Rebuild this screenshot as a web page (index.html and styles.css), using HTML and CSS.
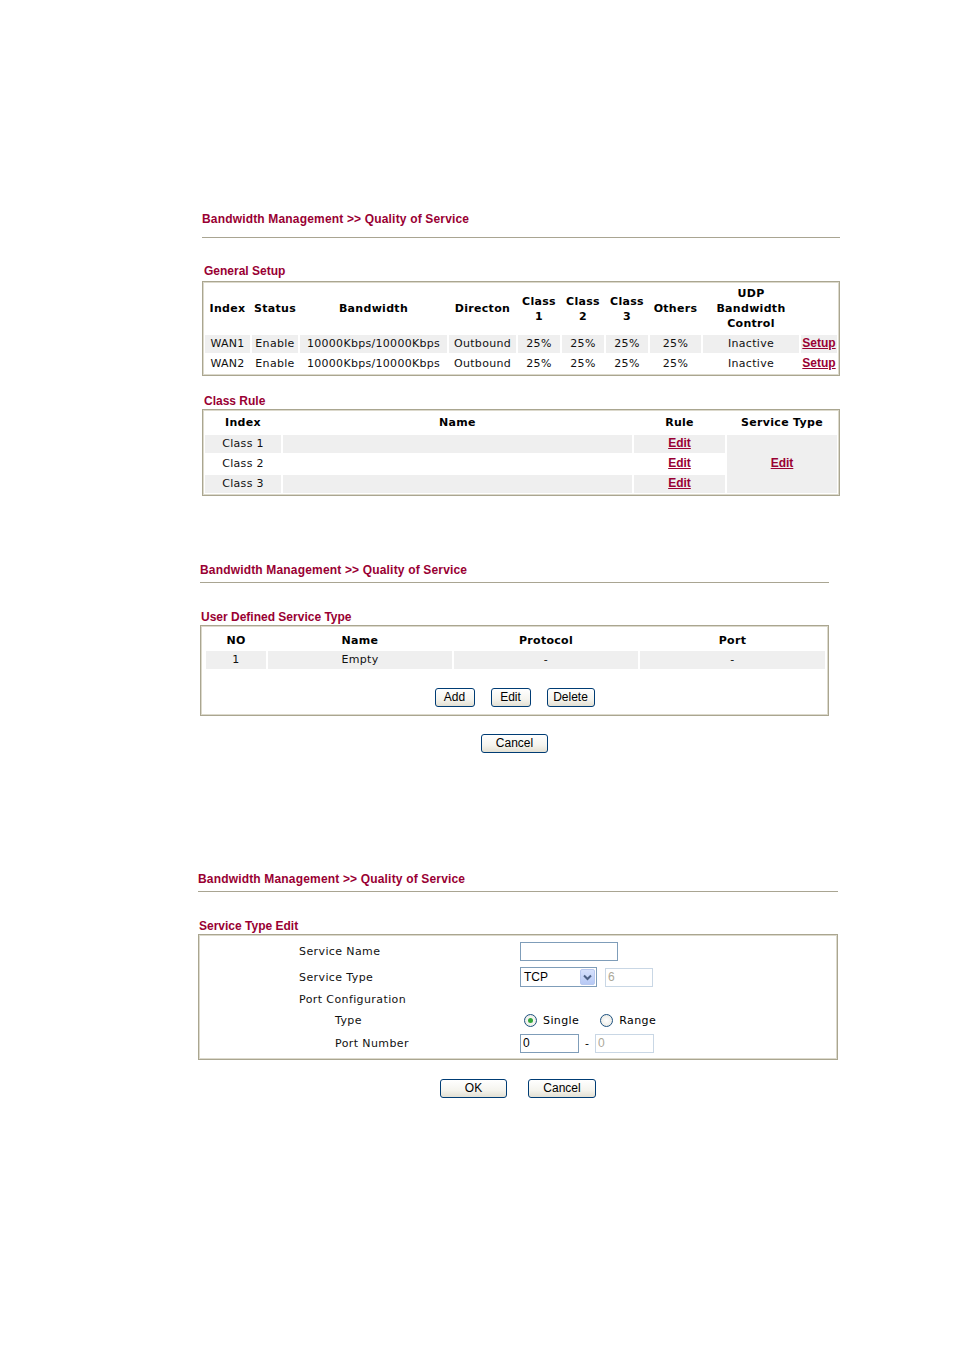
FILE: index.html
```html
<!DOCTYPE html>
<html>
<head>
<meta charset="utf-8">
<link rel="stylesheet" href="styles.css">
</head>
<body>
<main class="page">

<section class="panel p1">
  <h1 class="crumb">Bandwidth Management &gt;&gt; Quality of Service</h1>
  <div class="rule"></div>
  <h2 class="sec">General Setup</h2>
  <div class="box">
    <table class="grid gs">
      <colgroup>
        <col style="width:45px"><col style="width:46px"><col style="width:147px"><col style="width:67px">
        <col style="width:42px"><col style="width:42px"><col style="width:42px"><col style="width:51px">
        <col style="width:96px"><col style="width:36px">
      </colgroup>
      <tr class="head tall">
        <th>Index</th><th>Status</th><th>Bandwidth</th><th>Directon</th>
        <th>Class<br>1</th><th>Class<br>2</th><th>Class<br>3</th><th>Others</th>
        <th>UDP<br>Bandwidth<br>Control</th><th></th>
      </tr>
      <tr class="shade">
        <td>WAN1</td><td>Enable</td><td>10000Kbps/10000Kbps</td><td>Outbound</td>
        <td>25%</td><td>25%</td><td>25%</td><td>25%</td><td>Inactive</td><td><a class="lnk" href="#">Setup</a></td>
      </tr>
      <tr>
        <td>WAN2</td><td>Enable</td><td>10000Kbps/10000Kbps</td><td>Outbound</td>
        <td>25%</td><td>25%</td><td>25%</td><td>25%</td><td>Inactive</td><td><a class="lnk" href="#">Setup</a></td>
      </tr>
    </table>
  </div>

  <h2 class="sec sec-cr">Class Rule</h2>
  <div class="box box-cr">
    <table class="grid cr">
      <colgroup>
        <col style="width:76px"><col style="width:349px"><col style="width:91px"><col style="width:110px">
      </colgroup>
      <tr class="head">
        <th>Index</th><th>Name</th><th>Rule</th><th>Service Type</th>
      </tr>
      <tr class="shade">
        <td>Class 1</td><td></td><td><a class="lnk" href="#">Edit</a></td>
        <td rowspan="3" class="st"><a class="lnk" href="#">Edit</a></td>
      </tr>
      <tr>
        <td>Class 2</td><td></td><td><a class="lnk" href="#">Edit</a></td>
      </tr>
      <tr class="shade">
        <td>Class 3</td><td></td><td><a class="lnk" href="#">Edit</a></td>
      </tr>
    </table>
  </div>
</section>

<section class="panel p2">
  <h1 class="crumb">Bandwidth Management &gt;&gt; Quality of Service</h1>
  <div class="rule"></div>
  <h2 class="sec">User Defined Service Type</h2>
  <div class="box box-ud">
    <table class="grid ud">
      <colgroup>
        <col style="width:60px"><col style="width:184px"><col style="width:184px"><col style="width:185px">
      </colgroup>
      <tr class="head">
        <th>NO</th><th>Name</th><th>Protocol</th><th>Port</th>
      </tr>
      <tr class="shade">
        <td>1</td><td>Empty</td><td>-</td><td>-</td>
      </tr>
    </table>
    <div class="btnrow inbox">
      <button class="btn w40">Add</button>
      <button class="btn w40">Edit</button>
      <button class="btn w48">Delete</button>
    </div>
  </div>
  <div class="btnrow under">
    <button class="btn w67">Cancel</button>
  </div>
</section>

<section class="panel p3">
  <h1 class="crumb">Bandwidth Management &gt;&gt; Quality of Service</h1>
  <div class="rule"></div>
  <h2 class="sec">Service Type Edit</h2>
  <div class="box box-se">
    <div class="form">
      <div class="lbl">Service Name</div>
      <div class="fld"><input class="inp w98" type="text"></div>

      <div class="lbl">Service Type</div>
      <div class="fld">
        <span class="sel"><span class="selv">TCP</span><span class="arr"><svg width="9" height="7" viewBox="0 0 9 7"><path d="M1 1.5 L4.5 5 L8 1.5" fill="none" stroke="#4d6185" stroke-width="2"/></svg></span></span>
        <input class="inp w48 dis" type="text" value="6" disabled>
      </div>

      <div class="lbl">Port Configuration</div>
      <div class="fld"></div>

      <div class="lbl ind">Type</div>
      <div class="fld">
        <span class="radio on"></span><span class="rtxt">Single</span>
        <span class="radio"></span><span class="rtxt">Range</span>
      </div>

      <div class="lbl ind">Port Number</div>
      <div class="fld">
        <input class="inp w59" type="text" value="0">
        <span class="dash">-</span>
        <input class="inp w59 dis" type="text" value="0" disabled>
      </div>
    </div>
  </div>
  <div class="btnrow under3">
    <button class="btn w67">OK</button>
    <button class="btn w68">Cancel</button>
  </div>
</section>

</main>
</body>
</html>
```

FILE: styles.css
```css
* { box-sizing: border-box; }
html, body { margin: 0; padding: 0; background: #fff; }
body { font-family: "DejaVu Sans", Verdana, sans-serif; font-size: 11px; color: #000; }

.page { display: flex; flex-direction: column; padding-top: 212px; }

.panel { display: flex; flex-direction: column; }
.p1 { margin-left: 202px; width: 638px; }
.p2 { margin-left: 200px; width: 629px; margin-top: 67px; }
.p3 { margin-left: 198px; width: 640px; margin-top: 119px; }

.crumb {
  margin: 0; font-family: "Liberation Sans", Arial, sans-serif; font-weight: bold;
  font-size: 12px; line-height: 14px; height: 14px; color: #990033; white-space: nowrap;
  letter-spacing: 0.17px;
}
.rule { height: 1px; background: #a9a592; margin-top: 11px; }
.p2 .rule, .p3 .rule { margin-top: 5px; }

.sec {
  margin: 26px 0 0 2px; font-family: "Liberation Sans", Arial, sans-serif; font-weight: bold;
  font-size: 12px; line-height: 14px; height: 14px; color: #990033;
}
.p2 .sec, .p3 .sec { margin-left: 1px; margin-top: 27px; }
.sec-cr { margin-top: 18px; }

.box {
  margin-top: 3px; border: 1px solid #aaa690;
  box-shadow: inset 0 0 0 1px #dcd9cc;
}
.box-cr { margin-top: 1px; }
.box-ud { margin-top: 1px; padding: 3px 3px 0 3px; }
.box-se { margin-top: 1px; }

.grid { width: 100%; border-collapse: separate; border-spacing: 2px; table-layout: fixed; }
.grid th { font-weight: bold; text-align: center; padding: 0; line-height: 15px; letter-spacing: 0.3px; white-space: nowrap; }
.grid td { text-align: center; padding: 0; height: 18px; line-height: 18px; white-space: nowrap; letter-spacing: 0.3px; color: #111; overflow: hidden; }
.gs .tall th { height: 49px; }
.cr .head th { height: 21px; }
.ud .head th { height: 18px; }
.shade td { background: #efefef; }
.cr td.st { background: #efefef; }

.lnk { font-family: "Liberation Sans", Arial, sans-serif; font-weight: bold; font-size: 12px; line-height: 14px; color: #990033; text-decoration: underline; letter-spacing: 0; }

.btnrow { display: flex; justify-content: center; }
.inbox { gap: 16px; padding: 17px 0 8px 0; }
.under { margin-top: 18px; }
.under3 { margin-top: 19px; gap: 21px; }

.btn {
  height: 19px; padding: 0; margin: 0; border: 1px solid #003c74; border-radius: 3px;
  background: linear-gradient(#ffffff 0%, #f5f4ee 60%, #e3e0d3 100%);
  font-family: "Liberation Sans", Arial, sans-serif; font-size: 12px; color: #000; line-height: 17px;
}
.w40 { width: 40px; } .w48 { width: 48px; } .w67 { width: 67px; } .w68 { width: 68px; }

.form {
  display: grid; grid-template-columns: 321px 1fr;
  grid-template-rows: 26px 26px 18px 24px 22px;
  padding: 3px 0 5px 0;
}
.lbl { padding-left: 100px; display: flex; align-items: center; letter-spacing: 0.4px; white-space: nowrap; color: #111; }
.lbl.ind { padding-left: 136px; }
.fld { display: flex; align-items: center; }

.inp {
  height: 19px; border: 1px solid #7f9db9; padding: 0 2px; margin: 0; background: #fff;
  font-family: "Liberation Sans", Arial, sans-serif; font-size: 12px; color: #000;
}
.inp.dis { color: #aca899; background: #fff; border-color: #c9d7e5; }
.w98 { width: 98px; } .w48 { width: 48px; } .w59 { width: 59px; }

.sel {
  display: inline-flex; align-items: center; justify-content: space-between;
  width: 77px; height: 20px; border: 1px solid #7f9db9; padding: 1px 1px 1px 3px; margin-right: 8px; background: #fff;
  font-family: "Liberation Sans", Arial, sans-serif; font-size: 12px;
}
.arr {
  width: 15px; height: 16px; display: flex; align-items: center; justify-content: center;
  background: linear-gradient(#d6e1fc, #b7c9f5); border: 1px solid #b9c9ef; border-radius: 2px;
}

.radio {
  width: 13px; height: 13px; border-radius: 50%; border: 1px solid #1c5180;
  background: radial-gradient(circle at 50% 50%, #fff 0, #e6e5dd 100%);
  display: inline-flex; align-items: center; justify-content: center; margin-left: 4px;
}
.radio.on::after { content: ""; width: 5px; height: 5px; border-radius: 50%; background: #34a63c; }
.rtxt { margin-left: 6px; margin-right: 17px; letter-spacing: 0.4px; font-size: 11px; }

.dash { width: 16px; text-align: center; }
```
